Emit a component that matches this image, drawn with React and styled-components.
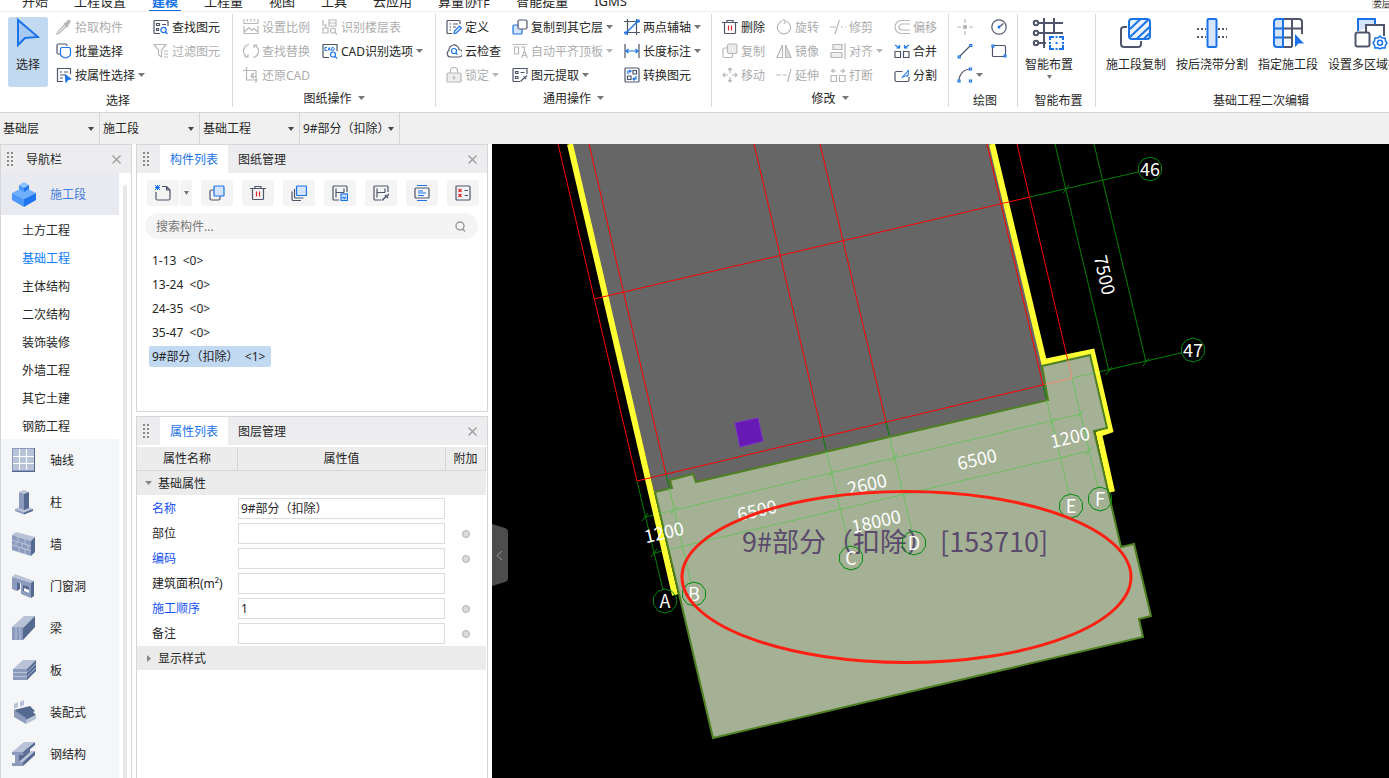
import styled, { createGlobalStyle } from "styled-components";

const SLATE = "#4f566b";
const BLUE = "#1a73e8";
const OFF = "#b8b8b8";

const GlobalStyle = createGlobalStyle`
  * {
    box-sizing: border-box;
  }

  body {
    margin: 0;
    overflow: hidden;
    background: #fff;
    color: #262626;
    font-family: "Noto Sans", "Noto Sans CJK SC", sans-serif;
    font-size: 12px;
    line-height: 21px;
  }

  button,
  input,
  select {
    font: inherit;
    color: inherit;
  }

  button {
    border: 0;
    padding: 0;
    background: none;
    white-space: nowrap;
  }

  svg {
    display: block;
    flex: none;
  }
`;

const Page = styled.div`
  display: flex;
  flex-direction: column;
  height: 100vh;
`;

/* ---------- menu ---------- */

const MenuBar = styled.nav`
  display: flex;
  align-items: flex-end;
  height: 12px;
  padding-left: 9px;
  overflow: hidden;
  border-bottom: 1px solid #f0f0f0;
`;

const MenuItem = styled.button`
  height: 22px;
  margin: 0 10px -1px;
  padding: 2px 3px 0;
  font-size: 13px;
  line-height: 18px;
  font-weight: ${({ $active }) => ($active ? 700 : 400)};
  color: ${({ $active }) => ($active ? BLUE : "#262626")};
  border-bottom: 2px solid ${({ $active }) => ($active ? BLUE : "transparent")};
`;

const FloorChip = styled.span`
  width: 17px;
  height: 10px;
  margin: 0 0 2px auto;
  overflow: hidden;
  border: 1px solid #e0e0e0;
  border-width: 0 0 1px 1px;
  font-size: 9px;
  line-height: 9px;
  white-space: nowrap;
`;

/* ---------- ribbon ---------- */

const Ribbon = styled.div`
  display: flex;
  flex: none;
  padding: 2px 0 5px;
  overflow: hidden;
  border-bottom: 1px solid #d6d6d6;
`;

const Group = styled.section`
  display: flex;
  flex: none;
  flex-direction: column;
  width: ${({ $width }) => $width}px;
  height: 93px;
  border-right: 1px solid #dadada;
`;

const GroupBody = styled.div`
  display: flex;
  gap: ${({ $gap }) => $gap}px;
  height: 73px;
  padding: 1px 0 0 ${({ $pad }) => $pad}px;
`;

const GroupLabel = styled.div`
  display: flex;
  align-items: center;
  justify-content: center;
  gap: 6px;
  height: 20px;
  margin-top: ${({ $more }) => ($more ? 1 : 3)}px;
  padding-left: ${({ $more }) => ($more ? 0 : 4)}px;
`;

const Column = styled.div`
  display: flex;
  flex-direction: column;
`;

const DrawGrid = styled.div`
  display: grid;
  grid-template-columns: 34px 34px;
  grid-auto-rows: 24px;
`;

const Tool = styled.button`
  display: flex;
  align-items: center;
  gap: 3px;
  height: 24px;
  color: ${({ disabled }) => (disabled ? "#adadad" : "#262626")};
`;

const BigTool = styled.button`
  display: flex;
  flex-direction: column;
  align-items: center;
  height: 70px;
  margin-top: 2px;
  padding: 0 ${({ $active }) => ($active ? 8 : 0)}px;
  border-radius: 3px;
  background: ${({ $active }) => ($active ? "#c2d9f2" : "none")};

  span {
    margin-top: 5px;
  }
`;

const Caret = ({ size = 7, color = "#777" }) => (
  <svg width={size} height="4" viewBox="0 0 7 4" preserveAspectRatio="none">
    <path d="M0 0h7L3.5 4z" fill={color} />
  </svg>
);

// Every glyph gets the outline colour, the accent colour and a light fill.
const glyphs = {
  pipette: (d) => (
    <>
      <path d="M9 4l3-3c1-1 3.500.500 2.500 2.500L12 6.500l.500.800-1.500 1.500L7.200 5l1.500-1.500z" fill={d} stroke="none" />
      <path d="M8.500 6L2 12.500 1 15l2.500-1L10 7.500" />
    </>
  ),
  batch: (d, b) => (
    <>
      <path d="M4 11H2.500A1.500 1.500 0 011 9.500v-7A1.500 1.500 0 012.500 1h7A1.500 1.500 0 0111 2.500V3" />
      <path d="M6 4.500h7a1.500 1.500 0 011.500 1.500v5c0 2-3 3.500-5 4-2-.500-5-2-5-4V6A1.500 1.500 0 016 4.500z" stroke={b} fill="#fff" />
    </>
  ),
  attr: (d, b) => (
    <>
      <path d="M7 14.500H1.500v-13h13V7M4 5h2M8 5h4M4 8h5M4 11h3" />
      <path d="M9.500 8l5 4-2.500.500-2 2.500z" fill={b} stroke={b} />
    </>
  ),
  find: (d, b) => (
    <>
      <path d="M7 14.500H2a1 1 0 01-1-1v-11a1 1 0 011-1h12a1 1 0 011 1V7M3.500 4.500h3v2h-3zM9 5.500h4M3.500 9.500h2v2h-2z" />
      <circle cx="10.500" cy="11" r="2.700" stroke={b} />
      <path d="M12.500 13l2 2" stroke={b} />
    </>
  ),
  filter: () => <path d="M1 1.500h12L8.500 7v7l-3-2V7zM11 8h4M11 11h4M11 14h4" />,
  scale: () => (
    <path d="M1 0v4.500h14V0M4.500 2.500V0M8 2.500V0M11.500 2.500V0M1 7v7.500h14V7M1.500 12.500L6 8.500l3 3 2-2 4 3.500" />
  ),
  floors: () => (
    <>
      <path d="M1 1v5h4M7 1h7v6H7zM7 4h7M1 9h5v5H1zM3.500 6v3" />
      <circle cx="11" cy="11.500" r="2.500" />
      <path d="M13 13.500l2 2" />
    </>
  ),
  swap: () => (
    <path d="M6 1.500a6.500 6.500 0 00-3 11.500l2 1M1.500 14H5v-3M10 14.500A6.500 6.500 0 0013 3l-2-1M14.500 2H11v3" />
  ),
  cad: (d, b) => (
    <>
      <path d="M7 14.500H2a1 1 0 01-1-1v-12h14V8" />
      <path d="M5 4.500H3v3h2M6 7.500l1.200-3 1.200 3M6.500 6.500h1.500M9.800 4.500v3h1c2 0 2-3 0-3z" stroke={b} strokeWidth="1" />
      <circle cx="11" cy="11.500" r="2.500" stroke={b} />
      <path d="M13 13.500l2 2" stroke={b} />
    </>
  ),
  restore: () => <path d="M3.500 0v13H15M0 3.500h13V16M8 7h3M7.500 9.500h5M11 6l-3 3.500 3 2" />,
  define: (d, b) => (
    <>
      <path d="M6 14.500H2a1 1 0 01-1-1v-11a1 1 0 011-1h11a1 1 0 011 1V5M3.500 5H5M7 5h5M3.500 8H5M7 8h3M3.500 11H5" />
      <path d="M8 14.500l.500-2.500 5-5 2 2-5 5z" stroke={b} fill="#d6e6fb" />
    </>
  ),
  cloud: (d, b) => (
    <>
      <path d="M4 14a3.500 3.500 0 01-1-6.500 5 5 0 0110-1A3.700 3.700 0 0112.500 14z" />
      <circle cx="8" cy="8" r="2.500" stroke={b} />
      <path d="M9.800 10l1.700 1.700" stroke={b} />
    </>
  ),
  lock: () => (
    <>
      <rect x="1" y="6" width="14" height="9" rx="1" fill="#eee" />
      <path d="M4.500 6V4a3.500 3.500 0 017 0v2M8 9v4M6.500 10.500h3" />
    </>
  ),
  copyTo: (d, b, l) => (
    <>
      <rect x="1" y="6" width="9" height="9" rx="1" stroke={b} fill={l} />
      <rect x="6" y="1" width="9" height="9" rx="1.500" fill="#fff" />
    </>
  ),
  align: () => <path d="M1 1.500h14M2.500 4h4v7h-4zM9 4h3.500v4M9.500 15l3-7 3 7M10.500 12.500h4" />,
  extract: () => (
    <>
      <path d="M8 14.500H2a1 1 0 01-1-1v-11a1 1 0 011-1h13V7M3.500 4.500H6v2H3.500zM8.500 5.500h4M3.500 9.500H6v2H3.500z" />
      <path d="M8.500 14.500l4-4M11.500 9.500l2.500 2.500M13 10.500l2-2" />
    </>
  ),
  axis: (d, b) => (
    <>
      <path d="M3.500 0v16M12.500 0v16M0 2.500h16M0 13.500h16" />
      <path d="M2 14L14 2" stroke={b} strokeWidth="1.500" />
      <path d="M1 13h2v2H1zM13 1h2v2h-2z" stroke={b} />
    </>
  ),
  length: (d, b) => (
    <>
      <path d="M1 1v14M15 1v14" />
      <path d="M2 8h12M4.500 6L2 8l2.500 2M11.500 6L14 8l-2.500 2" stroke={b} />
    </>
  ),
  convert: (d, b) => (
    <>
      <rect x="1" y="1" width="14" height="14" rx="1" />
      <path d="M9 3.500h3.500V7H9zM3.500 9H7v3.500H3.500z" />
      <path d="M4 7V4h2.500M5.500 3L7 4 5.500 5.500M12 9v3H9.500M10.500 10.500L9 12l1.500 1.500" stroke={b} />
    </>
  ),
  trash: () => (
    <>
      <path d="M0 3.500h16M5 3.500v-2h6v2M2.500 4v9.500a1 1 0 001 1h9a1 1 0 001-1V4" />
      <path d="M6.500 6.500v5M9.500 6.500v5" stroke="#d9232e" />
    </>
  ),
  rotate: () => <path d="M6 2a6.600 6.600 0 104.500.200M6.500.500L9.500 2 8 5" />,
  trim: () => <path d="M0 8h6M11 8h2M15 8h1M9.500 1L5 15" />,
  offset: () => <path d="M16 1.500H7.500a6.500 6.500 0 000 13H16M16 5H8a3 3 0 000 6h8" />,
  copy: () => (
    <>
      <rect x="1" y="5" width="9.500" height="9.500" rx="1.500" />
      <rect x="5.500" y="1" width="9.500" height="9.500" rx="1.500" fill="#ececec" />
    </>
  ),
  mirror: () => (
    <>
      <path d="M6.500 2v12.500H1z" />
      <path d="M9.500 2v12.500H15z" fill="#ddd" />
    </>
  ),
  alignTo: () => (
    <>
      <path d="M15 0v16" />
      <path d="M3 1.500h9v5H3zM1 9.500h11v5H1z" fill="#eee" />
    </>
  ),
  merge: (d, b) => (
    <>
      <path d="M1 8.500h5.500v6H1zM9.500 8.500H15v6H9.500z" />
      <path d="M1 2l4 2.500M5.500 2v3h-3M15 2l-4 2.500M10.500 2v3h3" stroke={b} />
    </>
  ),
  move: () => (
    <path d="M8 1v5M8 10v5M1 8h5M10 8h5M6 3l2-2 2 2M6 13l2 2 2-2M3 6L1 8l2 2M13 6l2 2-2 2" />
  ),
  extend: () => <path d="M0 8h5M7 8h4M15 2l-3.500 13" />,
  split: () => <path d="M1 8.500h5.500v6H1zM9.500 8.500H15v6H9.500zM6 4H1.500M3.500 2l-2 2 2 1.500M10 4h4.500M12.500 2l2 2-2 1.500" />,
  cut: (d, b) => (
    <>
      <path d="M8.500 4.500h-6A1.500 1.500 0 001 6v7a1.500 1.500 0 001.500 1.500h11A1.500 1.500 0 0015 13v-3" />
      <path d="M8 10.500L14.500 3l-.500 6h-3z" stroke={b} strokeWidth="1" fill="#d6e6fb" />
    </>
  ),
  point: (d) => (
    <>
      <path d="M8 0v4M8 12v4M0 8h4M12 8h4" />
      <circle cx="8" cy="8" r="2.200" fill={d} stroke="none" />
    </>
  ),
  circle: (d, b) => (
    <>
      <circle cx="8" cy="8" r="7.200" />
      <path d="M8 8l4.500-3.500" />
      <circle cx="8" cy="8" r="1.500" fill={b} stroke="none" />
    </>
  ),
  line: (d, b) => (
    <>
      <path d="M2.500 13.500l11-11" />
      <path d="M1.200 13h2v2h-2zM12.800 1.500h2v2h-2z" stroke={b} fill="#fff" />
    </>
  ),
  rect: (d, b) => (
    <>
      <rect x="1.500" y="2.500" width="13" height="11" rx="1" />
      <path d="M1 2h2v2H1zM13 12h2v2h-2z" stroke={b} fill="#fff" />
    </>
  ),
  arc: (d, b) => (
    <>
      <path d="M2 14C2 7 7 2 14 2" />
      <path d="M1 13h2v2H1zM12.500 1h2v2h-2zM12.500 13h2v2h-2z" stroke={b} fill="#fff" />
    </>
  ),
  create: (d, b) => (
    <>
      <path d="M7 1.500h4.500L15 5v8.500a1.500 1.500 0 01-1.500 1.500h-11A1.500 1.500 0 011 13.500V7M11.500 1.500V5H15" />
      <path d="M0 0l5 5M5 0L0 5M2.500 0v5M0 2.500h5" stroke={b} strokeWidth="1" />
    </>
  ),
  dup: (d, b, l) => (
    <>
      <path d="M5 5H2.500A1.500 1.500 0 001 6.500v7A1.500 1.500 0 002.500 15h7a1.500 1.500 0 001.500-1.500V11" />
      <rect x="5" y="1" width="10" height="10" rx="1" stroke={b} fill={l} />
    </>
  ),
  layers: (d, b, l) => (
    <>
      <path d="M3.500 4v8a1 1 0 001 1h8M1 6.500V14a1.500 1.500 0 001.500 1.500H10" />
      <rect x="5.500" y="1" width="10" height="9.500" rx="1" stroke={b} fill={l} />
    </>
  ),
  saveTo: (d, b, l) => (
    <>
      <path d="M7 15H2a1 1 0 01-1-1V2a1 1 0 011-1h12a1 1 0 011 1v5M4 3.500v9M4 7.500h8M12 3.500v4" />
      <rect x="9" y="9" width="6.500" height="6.500" stroke={b} fill={l} />
      <path d="M10.500 12l1.800 1.500L14 12" stroke={b} />
    </>
  ),
  saveFrom: () => (
    <>
      <path d="M8 15H2a1 1 0 01-1-1V2a1 1 0 011-1h12a1 1 0 011 1v5M4 3.500v9M4 7.500h8M12 3.500v4" />
      <path d="M9 15.500l4-4M12 10l3 3M13.500 11.500L16 9" strokeWidth="1.500" />
    </>
  ),
  sort: (d, b) => (
    <>
      <rect x="1" y="3" width="14" height="10" rx="1" />
      <path d="M3 .500h10M3 15.500h10M4 6h5M4 8h8M4 10.500h6" stroke={b} />
    </>
  ),
  check: () => (
    <>
      <rect x="1" y="1" width="14" height="14" rx="1" />
      <path d="M9.500 5.500H13M9.500 10.500H13" />
      <path d="M3.500 4l3 3M6.500 4l-3 3M3.500 9l3 3M6.500 9l-3 3" stroke="#d9232e" />
    </>
  ),
};

const Glyph = ({ name, off, light = "#d3e4fb" }) => {
  const line = off ? OFF : SLATE;
  return (
    <svg width="16" height="16" viewBox="0 0 16 16" fill="none" stroke={line} strokeWidth="1.2">
      {glyphs[name](line, off ? OFF : BLUE, off ? "#eee" : light)}
    </svg>
  );
};

const bigGlyphs = {
  select: (
    <path d="M7 3v25l7-7 13-1z" fill="#a5c8f5" stroke={BLUE} />
  ),
  smart: (
    <>
      <path d="M6 6h24M6 16h24M6 26h7M11 1v30M21 1v15" />
      <circle cx="3" cy="6" r="2.200" />
      <circle cx="3" cy="16" r="2.200" />
      <circle cx="3" cy="26" r="2.200" />
      <path d="M17 23v-3h4M26 20h4v3M30 28v4h-4M21 32h-4v-4M22.500 26h2M22.500 20h2M22.500 32h2M17 25v2M30 25v2" stroke={BLUE} />
    </>
  ),
  sectionCopy: (
    <>
      <path d="M7 10H4a3 3 0 00-3 3v14a3 3 0 003 3h14a3 3 0 003-3v-3" />
      <rect x="9" y="2" width="21" height="20" rx="3" stroke={BLUE} fill="#eaf2fe" />
      <path d="M10 12L20 2.500M10 20L28 3M17 21.500L29.500 10M24 21.500l5.500-5" stroke={BLUE} />
    </>
  ),
  poured: (
    <>
      <rect x="11.500" y="2" width="9" height="28" rx="1" stroke={BLUE} fill="#d3e4fb" />
      <path d="M1 12h9M1 20h9M22 12h9M22 20h9" strokeDasharray="2 2" />
    </>
  ),
  assign: (
    <>
      <path d="M11 2h16a3 3 0 013 3v12M11 11.500h18M11 20.500h9M20 2v28M20 30h-9" />
      <path d="M11 2H5a3 3 0 00-3 3v22a3 3 0 003 3h6zM2 11.500h9M2 20.500h9" stroke={BLUE} fill="#d3e4fb" />
      <path d="M23 17v13l3.500-3.500H32z" fill={BLUE} stroke="none" />
    </>
  ),
  zones: (
    <>
      <path d="M4 14V2h17v6" stroke={BLUE} fill="#d3e4fb" />
      <path d="M12 15V8h18v11" fill="#fff" />
      <rect x="1.500" y="15.500" width="14" height="14" rx="2" fill="#fff" />
      <path d="M26 19l2 2h3l.500 3L33 26l-1.500 2-.500 3-3-.200L26 32l-2-1.200-3 .200-.500-3L19 26l1.500-2 .500-3h3z" stroke={BLUE} strokeWidth="1.500" fill="#fff" />
      <circle cx="26" cy="25.700" r="2.500" stroke={BLUE} strokeWidth="1.500" />
    </>
  ),
};

const BigGlyph = ({ name }) => (
  <svg width="32" height="32" viewBox="0 0 32 32" overflow="visible" fill="none" stroke={SLATE} strokeWidth="2">
    {bigGlyphs[name]}
  </svg>
);

const menus = ["开始", "工程设置", "建模", "工程量", "视图", "工具", "云应用", "算量协作", "智能提量", "IGMS"];

// [glyph, label, disabled, has drop-down]
const selectTools = [
  [["pipette", "拾取构件", true], ["batch", "批量选择"], ["attr", "按属性选择", false, true]],
  [["find", "查找图元"], ["filter", "过滤图元", true]],
];

const drawingTools = [
  [["scale", "设置比例", true], ["swap", "查找替换", true], ["restore", "还原CAD", true]],
  [["floors", "识别楼层表", true], ["cad", "CAD识别选项", false, true]],
];

const commonTools = [
  [["define", "定义"], ["cloud", "云检查"], ["lock", "锁定", true, true]],
  [["copyTo", "复制到其它层", false, true], ["align", "自动平齐顶板", true, true], ["extract", "图元提取", false, true]],
  [["axis", "两点辅轴", false, true], ["length", "长度标注", false, true], ["convert", "转换图元"]],
];

const editTools = [
  [["trash", "删除"], ["copy", "复制", true], ["move", "移动", true]],
  [["rotate", "旋转", true], ["mirror", "镜像", true], ["extend", "延伸", true]],
  [["trim", "修剪", true], ["alignTo", "对齐", true, true], ["split", "打断", true]],
  [["offset", "偏移", true], ["merge", "合并"], ["cut", "分割"]],
];

const sectionTools = [
  ["sectionCopy", "施工段复制"],
  ["poured", "按后浇带分割"],
  ["assign", "指定施工段"],
  ["zones", "设置多区域拆分"],
];

const ToolColumns = ({ columns }) =>
  columns.map((column, i) => (
    <Column key={i}>
      {column.map(([glyph, label, off, more]) => (
        <Tool key={label} disabled={off}>
          <Glyph name={glyph} off={off} />
          {label}
          {more && <Caret color={off ? OFF : "#777"} />}
        </Tool>
      ))}
    </Column>
  ));

const RibbonBar = () => (
  <Ribbon>
    <Group $width={233}>
      <GroupBody $pad={8} $gap={8}>
        <BigTool $active>
          <svg width="24" height="32" viewBox="5 0 24 32" fill="none" strokeWidth="2">
            {bigGlyphs.select}
          </svg>
          <span>选择</span>
        </BigTool>
        <ToolColumns columns={selectTools} />
      </GroupBody>
      <GroupLabel>选择</GroupLabel>
    </Group>
    <Group $width={203}>
      <GroupBody $pad={10} $gap={12}>
        <ToolColumns columns={drawingTools} />
      </GroupBody>
      <GroupLabel $more>
        图纸操作 <Caret />
      </GroupLabel>
    </Group>
    <Group $width={276}>
      <GroupBody $pad={10} $gap={11}>
        <ToolColumns columns={commonTools} />
      </GroupBody>
      <GroupLabel $more>
        通用操作 <Caret />
      </GroupLabel>
    </Group>
    <Group $width={237}>
      <GroupBody $pad={10} $gap={11}>
        <ToolColumns columns={editTools} />
      </GroupBody>
      <GroupLabel $more>
        修改 <Caret />
      </GroupLabel>
    </Group>
    <Group $width={69}>
      <GroupBody $pad={8} $gap={0}>
        <DrawGrid>
          <Tool aria-label="点" disabled>
            <Glyph name="point" off />
          </Tool>
          <Tool aria-label="圆">
            <Glyph name="circle" />
          </Tool>
          <Tool aria-label="直线">
            <Glyph name="line" />
          </Tool>
          <Tool aria-label="矩形">
            <Glyph name="rect" />
          </Tool>
          <Tool aria-label="弧线">
            <Glyph name="arc" />
            <Caret />
          </Tool>
        </DrawGrid>
      </GroupBody>
      <GroupLabel>绘图</GroupLabel>
    </Group>
    <Group $width={78}>
      <GroupBody $pad={7} $gap={0}>
        <BigTool>
          <BigGlyph name="smart" />
          <span>智能布置</span>
          <Caret size={5} />
        </BigTool>
      </GroupBody>
      <GroupLabel>智能布置</GroupLabel>
    </Group>
    <Group $width={327}>
      <GroupBody $pad={10} $gap={10}>
        {sectionTools.map(([glyph, label]) => (
          <BigTool key={glyph}>
            <BigGlyph name={glyph} />
            <span>{label}</span>
          </BigTool>
        ))}
      </GroupBody>
      <GroupLabel>基础工程二次编辑</GroupLabel>
    </Group>
  </Ribbon>
);

/* ---------- context selectors ---------- */

const ContextBar = styled.div`
  display: flex;
  flex: none;
  height: 31px;
  background: #f0f0f0;
`;

const Picker = styled.label`
  display: grid;
  grid-template-columns: 1fr 11px;
  align-items: center;
  width: 100px;
  border-right: 1px solid #d6d6d6;

  select {
    grid-area: 1 / 1 / 2 / 3;
    height: 30px;
    padding: 0 0 0 3px;
    border: 0;
    outline: 0;
    background: none;
    appearance: none;
  }

  svg {
    grid-area: 1 / 2;
    pointer-events: none;
  }
`;

const pickers = [
  ["楼层", "基础层"],
  ["专业", "施工段"],
  ["类型", "基础工程"],
  ["构件", "9#部分（扣除）"],
];

/* ---------- docked panels ---------- */

const Workspace = styled.div`
  display: flex;
  flex: 1;
  gap: 4px;
  min-height: 0;
`;

const Dock = styled.div`
  display: flex;
  flex: none;
  flex-direction: column;
  gap: 4px;
  width: 352px;
`;

const Panel = styled.section`
  display: flex;
  flex-direction: column;
  flex: ${({ $height }) => ($height ? `0 0 ${$height}px` : "1")};
  min-height: 0;
  overflow: hidden;
  border: 1px solid #d6d6d6;
  border-bottom-width: ${({ $height }) => ($height ? 1 : 0)}px;
`;

const NavPanel = styled(Panel)`
  flex: none;
  width: 132px;
`;

const PanelHeader = styled.header`
  display: flex;
  flex: none;
  align-items: center;
  height: 28px;
  padding: 0 10px 0 6px;
  background: #ededf0;
`;

const PanelTitle = styled.h2`
  margin: 0 0 0 12px;
  font-size: 12px;
  font-weight: 400;
`;

const Tab = styled.button`
  height: 28px;
  padding: 0 10px;
  color: ${({ $active }) => ($active ? BLUE : "#262626")};
  background: ${({ $active }) => ($active ? "#fff" : "none")};
`;

const Tabs = styled.div`
  display: flex;
  margin-left: 10px;
`;

const CloseButton = styled.button`
  margin-left: auto;
`;

const Grip = () => (
  <svg width="7" height="14" viewBox="0 0 7 14" fill="#8a8a8a">
    {[0, 4, 8, 12].map((y) => (
      <path key={y} d={`M0 ${y}h2v2H0zM4 ${y}h2v2H4z`} />
    ))}
  </svg>
);

const Close = () => (
  <CloseButton aria-label="关闭">
    <svg width="9" height="9" viewBox="0 0 9 9" stroke="#999" strokeWidth="1.2">
      <path d="M.500.500l8 8M8.500.500l-8 8" />
    </svg>
  </CloseButton>
);

const TabbedHeader = ({ tabs }) => (
  <PanelHeader>
    <Grip />
    <Tabs role="tablist">
      {tabs.map((tab, i) => (
        <Tab key={tab} role="tab" aria-selected={i === 0} $active={i === 0}>
          {tab}
        </Tab>
      ))}
    </Tabs>
    <Close />
  </PanelHeader>
);

/* ---------- navigation ---------- */

const NavBody = styled.div`
  display: flex;
  flex: 1;
  gap: 4px;
  min-height: 0;
`;

const NavList = styled.div`
  display: flex;
  flex-direction: column;
  width: 118px;
  overflow: hidden;
  background: #f5f6f8;
`;

const NavTrack = styled.div`
  width: 4px;
  margin-top: 12px;
  border-radius: 2px 2px 0 0;
  background: #e8e8ea;
`;

const NavItem = styled.button`
  display: flex;
  flex: none;
  align-items: center;
  gap: 13px;
  height: 42px;
  padding-left: 11px;
  color: ${({ $active }) => ($active ? "#3f7be0" : "#262626")};
  background: ${({ $active }) => ($active ? "#e9eaef" : "none")};
`;

const SubItem = styled.button`
  flex: none;
  height: 28px;
  padding: 2px 0 0 21px;
  text-align: left;
  color: ${({ $active }) => ($active ? "#0a7cf5" : "#262626")};
  background: #fff;
`;

const LIGHT = "#b9c3d8";
const MID = "#8c9bbd";
const DARK = "#546890";

const navIcons = {
  section: (
    <>
      <path d="M0 11l12-6 12 6-12 6z" fill="#6fb0fa" />
      <path d="M0 11l12 6v8L0 18z" fill="#4a97f7" />
      <path d="M24 11l-12 6v8l12-7z" fill="#1f74f0" />
      <path d="M7 3l5-3 5 3-5 3z" fill="#8cc2fb" />
      <path d="M7 3l5 3v4L7 7z" fill="#4a97f7" />
      <path d="M17 3l-5 3v4l5-3z" fill="#1f74f0" />
    </>
  ),
  grid: (
    <>
      <path d="M0 0h23v24H0z" fill={DARK} />
      <path d="M0 0h22v23H0z" fill={MID} />
      <path d="M1 1h21v21H1z" fill={LIGHT} />
      <path d="M1 8.500h21M1 15.500h21M7.500 1v21M14.500 1v21" stroke="#fff" />
    </>
  ),
  column: (
    <>
      <path d="M3 19l9-4 9 4-9 4z" fill={LIGHT} />
      <path d="M3 19l9 3.500v2L3 21z" fill={MID} />
      <path d="M21 19l-9 3.500v2L21 21z" fill={DARK} />
      <path d="M7 2l5-2 5 2-5 2z" fill={LIGHT} />
      <path d="M7 2l5 2v16l-5-2z" fill={MID} />
      <path d="M17 2l-5 2v16l5-2z" fill={DARK} />
    </>
  ),
  wall: (
    <>
      <path d="M0 3l4-3 19 5-4 4z" fill={LIGHT} />
      <path d="M0 3l19 6v15L0 18z" fill={MID} />
      <path d="M19 9l4-4v15l-4 4z" fill={DARK} />
      <path d="M0 8l19 6M0 13l19 6M6 5v5M13 7v5M4 10v4M10 12v4M16 13v5M7 15v5M13 17v5" stroke={LIGHT} />
    </>
  ),
  opening: (
    <>
      <path d="M0 3l3-3 19 7-3 3z" fill={LIGHT} />
      <path d="M0 3l19 6v15l-10-4V9L5 8v9l-5-2z" fill={MID} />
      <path d="M19 9l3-2v15l-3 2z" fill={DARK} />
      <path d="M5 8l3 1v6l-3 2zM11 11l6 2v6l-6-2z" fill={DARK} />
      <path d="M12 14l5 2v3l-5-2z" fill="#fff" />
    </>
  ),
  beam: (
    <>
      <path d="M0 11L12 0h11L11 12z" fill={LIGHT} />
      <path d="M0 11h11v13H0z" fill={MID} />
      <path d="M11 12L23 0v11L11 24z" fill={DARK} />
      <path d="M4 11v13M8 11v13" stroke={LIGHT} />
    </>
  ),
  slab: (
    <>
      <path d="M1 11L11 2h13l-9 9z" fill={LIGHT} />
      <path d="M1 11h14v11H1z" fill={MID} />
      <path d="M15 11l9-9v11l-9 9z" fill={DARK} />
      <path d="M1 14.500h14l9-9M1 18.500h14l9-9" stroke={LIGHT} fill="none" />
    </>
  ),
  precast: (
    <>
      <path d="M2 10l8-2 8-2 5 5-2 1 3 3-10 5z" fill={DARK} />
      <path d="M2 10l12 8v6L2 17z" fill={MID} />
      <path d="M24 15l-10 5v4l10-5z" fill={LIGHT} />
      <path d="M2 4l4-2v5L2 9zM8 2l4-2v5L8 7z" fill={LIGHT} />
    </>
  ),
  steel: (
    <>
      <path d="M0 10L12 0h11L11 10z" fill={LIGHT} />
      <path d="M0 10h11v3H7v7h4v4H0v-3h3v-8H0z" fill={MID} />
      <path d="M11 10L23 0v3L11 13z" fill={DARK} />
      <path d="M7 13h4l7-6v4L7 20z" fill={DARK} />
      <path d="M7 20L19 9h4L11 20z" fill={LIGHT} />
      <path d="M11 20L23 9v4L11 24z" fill={DARK} />
    </>
  ),
};

const NavIcon = ({ name }) => (
  <svg width="25" height="25" viewBox="0 0 25 25">
    {navIcons[name]}
  </svg>
);

const subItems = ["土方工程", "基础工程", "主体结构", "二次结构", "装饰装修", "外墙工程", "其它土建", "钢筋工程"];

const navItems = [
  ["grid", "轴线"],
  ["column", "柱"],
  ["wall", "墙"],
  ["opening", "门窗洞"],
  ["beam", "梁"],
  ["slab", "板"],
  ["precast", "装配式"],
  ["steel", "钢结构"],
];

const Navigation = () => (
  <NavPanel>
    <PanelHeader>
      <Grip />
      <PanelTitle>导航栏</PanelTitle>
      <Close />
    </PanelHeader>
    <NavBody>
      <NavList>
        <NavItem $active>
          <NavIcon name="section" />
          施工段
        </NavItem>
        {subItems.map((item) => (
          <SubItem key={item} $active={item === "基础工程"}>
            {item}
          </SubItem>
        ))}
        {navItems.map(([icon, label]) => (
          <NavItem key={icon}>
            <NavIcon name={icon} />
            {label}
          </NavItem>
        ))}
      </NavList>
      <NavTrack />
    </NavBody>
  </NavPanel>
);

/* ---------- component list ---------- */

const ToolStrip = styled.div`
  display: flex;
  gap: 9px;
  padding: 7px 8px 7px 10px;
`;

const StripButton = styled.button`
  display: flex;
  align-items: center;
  justify-content: center;
  width: ${({ $narrow }) => ($narrow ? 12 : 32)}px;
  height: 26px;
  border-radius: 3px;
  background: #f4f4f4;
`;

const SplitButton = styled.div`
  display: flex;
  gap: 1px;
`;

const SearchBox = styled.label`
  display: flex;
  align-items: center;
  height: 26px;
  margin: 0 9px 0 8px;
  padding: 0 12px 0 11px;
  border-radius: 13px;
  background: #f4f4f4;

  input {
    flex: 1;
    min-width: 0;
    padding: 0;
    border: 0;
    outline: 0;
    background: none;
  }

  input::placeholder {
    color: #777;
  }
`;

const ComponentItems = styled.ul`
  margin: 9px 0 0;
  padding: 0 12px;
  list-style: none;

  li {
    display: flex;
    align-items: center;
    height: 24px;
  }
`;

const ComponentItem = styled.button`
  height: 21px;
  padding: 0 6px 0 3px;
  border-radius: 2px;
  white-space: pre;
  background: ${({ $active }) => ($active ? "#c2d9f2" : "none")};
`;

const stripTools = [
  ["dup", "复制"],
  ["trash", "删除"],
  ["layers", "层间复制"],
  ["saveTo", "构件存档"],
  ["saveFrom", "构件提取"],
  ["sort", "排序"],
  ["check", "过滤"],
];

const components = ["1-13  <0>", "13-24  <0>", "24-35  <0>", "35-47  <0>", "9#部分（扣除）  <1>"];

const ComponentPanel = () => (
  <Panel $height={268}>
    <TabbedHeader tabs={["构件列表", "图纸管理"]} />
    <ToolStrip>
      <SplitButton>
        <StripButton aria-label="新建">
          <Glyph name="create" />
        </StripButton>
        <StripButton $narrow aria-label="新建选项">
          <Caret size={5} />
        </StripButton>
      </SplitButton>
      {stripTools.map(([glyph, label]) => (
        <StripButton key={glyph} aria-label={label}>
          <Glyph name={glyph} />
        </StripButton>
      ))}
    </ToolStrip>
    <SearchBox>
      <input type="text" aria-label="搜索构件" placeholder="搜索构件..." />
      <svg width="11" height="11" viewBox="0 0 11 11" fill="none" stroke="#999" strokeWidth="1.4">
        <circle cx="5" cy="5" r="4" />
        <path d="M7.500 8l2.500 2.500" />
      </svg>
    </SearchBox>
    <ComponentItems>
      {components.map((item, i) => (
        <li key={item}>
          <ComponentItem $active={i === 4}>{item}</ComponentItem>
        </li>
      ))}
    </ComponentItems>
  </Panel>
);

/* ---------- properties ---------- */

const PropertyTable = styled.table`
  width: 349px;
  margin-top: 2px;
  border-collapse: separate;
  border-spacing: 0;
  table-layout: fixed;

  thead th {
    height: 24px;
    padding: 0;
    font-weight: 400;
    background: #ececec;
    border-right: 1px solid #d6d6d6;
    border-bottom: 1px solid #d6d6d6;
  }

  td {
    height: 25px;
    padding: 0 1px 0 0;
  }

  input[type="text"] {
    display: block;
    width: 100%;
    height: 21px;
    padding: 0 2px;
    border: 1px solid #dcdcdc;
    outline: 0;
    background: #fff;
  }

  input[type="checkbox"] {
    display: block;
    width: 8px;
    height: 8px;
    margin: 0 auto;
    border: 1px solid #b0b0b0;
    border-radius: 50%;
    background: #dcdcdf;
    appearance: none;
  }
`;

const CategoryRow = styled.tr`
  th {
    height: 24px;
    padding: 0 0 0 8px;
    font-weight: 400;
    text-align: left;
    background: #ebebeb;
  }

  button {
    display: flex;
    align-items: center;
    gap: 6px;
  }
`;

const SpacerRow = styled.tr`
  && td {
    height: ${({ $height }) => $height}px;
  }
`;

const PropertyName = styled.label`
  display: block;
  padding-left: 15px;
  white-space: nowrap;
  color: ${({ $blue }) => ($blue ? "#1450f5" : "#262626")};
`;

// [id, label, value, blue label, has extra tick]
const properties = [
  ["name", "名称", "9#部分（扣除）", true, false],
  ["part", "部位", "", false, true],
  ["code", "编码", "", true, true],
  ["area", "建筑面积(m²)", "", false, false],
  ["order", "施工顺序", "1", true, true],
  ["note", "备注", "", false, true],
];

const PropertyPanel = () => (
  <Panel>
    <TabbedHeader tabs={["属性列表", "图层管理"]} />
    <PropertyTable>
      <colgroup>
        <col width="101" />
        <col width="208" />
        <col width="40" />
      </colgroup>
      <thead>
        <tr>
          <th>属性名称</th>
          <th>属性值</th>
          <th>附加</th>
        </tr>
      </thead>
      <tbody>
        <CategoryRow>
          <th colSpan="3">
            <button>
              <Caret color="#888" />
              基础属性
            </button>
          </th>
        </CategoryRow>
        <SpacerRow $height={1}>
          <td colSpan="3" />
        </SpacerRow>
        {properties.map(([id, label, value, blue, extra]) => (
          <tr key={id}>
            <td>
              <PropertyName htmlFor={id} $blue={blue}>
                {label}
              </PropertyName>
            </td>
            <td>
              <input id={id} type="text" defaultValue={value} />
            </td>
            <td>{extra && <input type="checkbox" aria-label={`${label}附加`} />}</td>
          </tr>
        ))}
        <CategoryRow>
          <th colSpan="3">
            <button>
              <svg width="7" height="7" viewBox="0 0 7 7">
                <path d="M2 0l4 3.500L2 7z" fill="#888" />
              </svg>
              显示样式
            </button>
          </th>
        </CategoryRow>
      </tbody>
    </PropertyTable>
  </Panel>
);

/* ---------- model view ---------- */

const Viewport = styled.main`
  position: relative;
  flex: 1;
  min-width: 0;
  overflow: hidden;
  background: #000;
`;

const Drawing = styled.svg`
  position: absolute;
  inset: 0;
  width: 100%;
  height: 100%;
  font-family: "Noto Sans CJK SC", sans-serif;
  font-size: 18px;
`;

const CollapseButton = styled.button`
  position: absolute;
  top: 380px;
  left: 0;
`;

const ANGLE = -13;

const slab =
  "1042,366 1090,355 1107,428 1094,431 1121,547 1134,544 1151,616 1139,619 1143,637 713,738 655,492 672,488 670,480 693,474 696,482 1048,400";

const redLines = [
  [558, 144, 637, 481],
  [589, 144, 666, 474],
  [754, 144, 823, 437],
  [820, 144, 886, 422],
  [987, 144, 1043, 385],
  [1017, 144, 1072, 378],
  [594, 299, 1030, 197],
  [637, 481, 1072, 378],
];

const greenLines = [
  [1030, 197, 1138, 172],
  [1072, 378, 1181, 353],
  [1055, 144, 1109, 371],
  [1094, 144, 1146, 362],
  [637, 481, 663, 590],
  [666, 474, 691, 583],
  [823, 437, 849, 546],
  [886, 422, 912, 531],
  [1043, 385, 1069, 494],
  [1072, 378, 1098, 488],
  [645, 517, 1080, 414],
  [654, 553, 1089, 451],
];

const ticks = [
  [645, 517],
  [654, 553],
  [674, 510],
  [831, 474],
  [894, 458],
  [1052, 422],
  [1080, 414],
  [1089, 451],
  [1066, 189],
  [1109, 371],
  [1146, 362],
];

const dimensions = [
  [664, 532, "1200"],
  [757, 510, "6500"],
  [867, 484, "2600"],
  [876, 521, "18000"],
  [977, 459, "6500"],
  [1070, 437, "1200"],
];

const bubbles = [
  [665, 601, "A"],
  [694, 594, "B"],
  [851, 558, "C"],
  [914, 543, "D"],
  [1071, 506, "E"],
  [1100, 499, "F"],
  [1150, 169, "46"],
  [1193, 350, "47"],
];

const bubblePoints = Array.from({ length: 10 }, (_, i) => {
  const a = (i * Math.PI) / 5 + Math.PI / 10;
  return `${Math.cos(a) * 12},${Math.sin(a) * 12}`;
}).join(" ");

const Lines = ({ lines }) => lines.map(([x1, y1, x2, y2], i) => <path key={i} d={`M${x1} ${y1}L${x2} ${y2}`} />);

const Ticks = () => ticks.map(([x, y]) => <path key={`${x}-${y}`} d={`M${x - 3} ${y + 4}L${x + 3} ${y - 4}`} />);

const ModelView = () => (
  <Viewport>
    <Drawing>
      <g transform="translate(-492 -144)" fill="none">
        <clipPath id="slab">
          <polygon points={slab} />
        </clipPath>
        <polygon points="570,144 992,144 1043,366 1048,400 900,600 679,594" fill="#666" />
        <g stroke="#008000">
          <Lines lines={greenLines} />
          <Ticks />
        </g>
        <path
          d="M570 144L675 595M992 144L1044 362L1092 352L1110 430L1099 434L1112 492"
          stroke="#ffff33"
          strokeWidth="6"
        />
        <g stroke="#f00">
          <Lines lines={redLines} />
        </g>
        <polygon points={slab} fill="#a4b195" stroke="#4f8022" strokeWidth="2" />
        <g clipPath="url(#slab)">
          <g stroke="#6cc060">
            <Lines lines={greenLines} />
            <Ticks />
          </g>
          <g stroke="#f08a70">
            <Lines lines={redLines} />
          </g>
        </g>
        <polygon points="735,423 758,418 763,441 740,447" fill="#661ab3" stroke="#7b2fd0" />
        <text x="742" y="552" fontSize="27" fill="#5b4a6d">
          9#部分（扣除） [153710]
        </text>
        <g fill="#fff" textAnchor="middle">
          {dimensions.map(([x, y, label]) => (
            <text key={x} transform={`translate(${x} ${y}) rotate(${ANGLE})`} y="7">
              {label}
            </text>
          ))}
          <text transform="translate(1105 275) rotate(77)" y="7">
            7500
          </text>
        </g>
        {bubbles.map(([x, y, label]) => (
          <g key={label} transform={`translate(${x} ${y})`}>
            <polygon points={bubblePoints} stroke="#008a10" />
            <text y="7" fill="#fff" textAnchor="middle">
              {label}
            </text>
          </g>
        ))}
        <ellipse cx="906.500" cy="577" rx="224.500" ry="85.500" stroke="#ff2014" strokeWidth="3" />
      </g>
    </Drawing>
    <CollapseButton aria-label="收起面板">
      <svg width="16" height="62" viewBox="0 0 16 62">
        <path d="M0 0l13 4q3 1 3 4v46q0 3-3 4L0 62z" fill="#4d4d4d" />
        <path d="M10 27l-5 4.500 5 4.500" fill="none" stroke="#999" />
      </svg>
    </CollapseButton>
  </Viewport>
);

const App = () => {
  return (
    <Page>
      <GlobalStyle />
      <MenuBar>
        {menus.map((menu) => (
          <MenuItem key={menu} $active={menu === "建模"}>
            {menu}
          </MenuItem>
        ))}
        <FloorChip>娄层</FloorChip>
      </MenuBar>
      <RibbonBar />
      <ContextBar>
        {pickers.map(([name, value]) => (
          <Picker key={name}>
            <select aria-label={name} defaultValue={value}>
              <option>{value}</option>
            </select>
            <Caret size={6} color="#444" />
          </Picker>
        ))}
      </ContextBar>
      <Workspace>
        <Navigation />
        <Dock>
          <ComponentPanel />
          <PropertyPanel />
        </Dock>
        <ModelView />
      </Workspace>
    </Page>
  );
};

export default App;
